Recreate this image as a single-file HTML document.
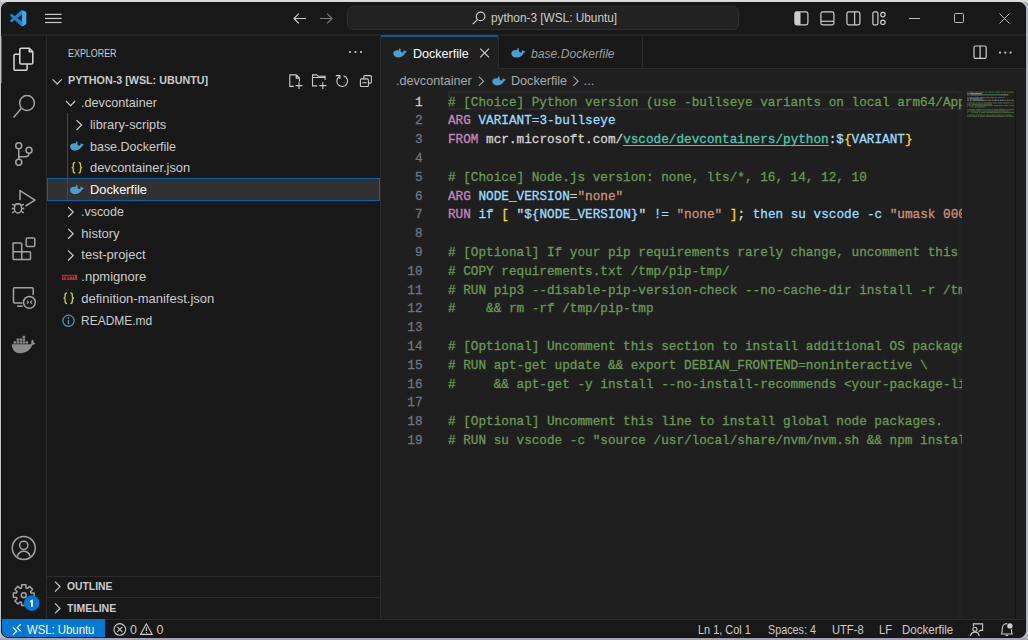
<!DOCTYPE html>
<html><head><meta charset="utf-8">
<style>
*{box-sizing:border-box;margin:0;padding:0}
html,body{width:1028px;height:640px;overflow:hidden;background:#b6b6c2}
body{position:relative;font-family:"Liberation Sans",sans-serif;color:#cccccc}
.a{position:absolute;white-space:pre}
#win{position:absolute;left:1px;top:2px;width:1025px;height:636px;background:#181818;border:1px solid #141414;border-radius:7px;overflow:hidden}
.ln{position:absolute;left:0;width:100%;height:1px;background:#2b2b2b}
.vl{position:absolute;top:0;width:1px;background:#2b2b2b}
svg{position:absolute;overflow:visible}
.mono{font-family:"Liberation Mono",monospace;-webkit-text-stroke:0.3px currentColor}
</style></head><body>
<div class="a" style="left:0;top:0;width:1028px;height:2px;background:#dadada"></div>
<div class="a" style="left:0;top:0;width:1px;height:640px;background:#c4c4c8"></div>
<div class="a" style="left:0;top:638px;width:1028px;height:2px;background:#a4a4b0"></div>
<div id="win"></div>
<!-- title bar -->
<!-- logo -->
<svg style="left:9.7px;top:9.7px" width="16.2" height="16.3" viewBox="0 0 100 100" preserveAspectRatio="none"><path fill="#1c86d6" d="M96.46 10.8L75.86.87a6.23 6.23 0 0 0-7.1 1.2L29.3 38.08 12.12 25.03a4.16 4.16 0 0 0-5.32.24L1.3 30.26a4.16 4.16 0 0 0 0 6.16L16.2 50 1.3 63.58a4.160 4.16 0 0 0 0 6.16l5.5 4.99a4.16 4.16 0 0 0 5.32.24L29.3 61.92l39.460 36.01a6.23 6.23 0 0 0 7.1 1.2l20.6-9.92A6.24 6.24 0 0 0 100 83.6V16.4a6.24 6.24 0 0 0-3.54-5.6zM75.02 72.7L45.1 50l29.92-22.7v45.4z"/><path fill="#3fabf5" d="M75.86.87L96.46 10.8A6.24 6.24 0 0 1 100 16.4V83.6a6.24 6.24 0 0 1-3.54 5.6l-20.6 9.92z"/></svg>
<!-- hamburger -->
<svg style="left:45px;top:13px" width="17" height="11" viewBox="0 0 17 11"><g stroke="#cccccc" stroke-width="1.2"><line x1="0" y1="1.4" x2="16.6" y2="1.4"/><line x1="0" y1="5.45" x2="16.6" y2="5.45"/><line x1="0" y1="9.5" x2="16.6" y2="9.5"/></g></svg>
<!-- back/forward -->
<svg style="left:293px;top:13px" width="14" height="11" viewBox="0 0 14 11"><g fill="none" stroke="#cccccc" stroke-width="1.2"><path d="M13 5.5H1M5.8 0.6L1 5.5l4.8 4.9"/></g></svg>
<svg style="left:319px;top:13px" width="14" height="11" viewBox="0 0 14 11"><g fill="none" stroke="#7a7a7a" stroke-width="1.2"><path d="M1 5.5H13M8.2 0.6L13 5.5l-4.8 4.9"/></g></svg>
<!-- command center -->
<div class="a" style="left:347px;top:6px;width:392px;height:24px;background:#222222;border:1px solid #2e2e2e;border-radius:6px"></div>
<svg style="left:471.5px;top:10.5px" width="14" height="14" viewBox="0 0 14 14"><g fill="none" stroke="#cccccc" stroke-width="1.2"><circle cx="8.6" cy="5.4" r="4.3"/><path d="M5.6 8.4L0.8 13.2"/></g></svg>
<span class="a" id="cc" style="left:490.5px;top:10.5px;font-size:12px;line-height:15px;color:#cccccc;transform-origin:0 0;transform:scaleX(0.985)">python-3 [WSL: Ubuntu]</span>
<!-- layout icons -->
<svg style="left:794px;top:10.5px" width="15" height="15" viewBox="0 0 15 15"><rect x="0.9" y="0.9" width="13" height="13" rx="1.8" fill="none" stroke="#cccccc" stroke-width="1.2"/><rect x="0.9" y="0.9" width="5.6" height="13" rx="1.2" fill="#cccccc"/></svg>
<svg style="left:820px;top:10.5px" width="15" height="15" viewBox="0 0 15 15"><rect x="0.9" y="0.9" width="13" height="13" rx="1.8" fill="none" stroke="#cccccc" stroke-width="1.2"/><path d="M0.9 10.3H13.9" stroke="#cccccc" stroke-width="1.2"/></svg>
<svg style="left:846px;top:10.5px" width="15" height="15" viewBox="0 0 15 15"><rect x="0.9" y="0.9" width="13" height="13" rx="1.8" fill="none" stroke="#cccccc" stroke-width="1.2"/><path d="M8.6 0.9V13.9" stroke="#cccccc" stroke-width="1.2"/></svg>
<svg style="left:872px;top:10.5px" width="15" height="15" viewBox="0 0 15 15"><g fill="none" stroke="#cccccc" stroke-width="1.2"><rect x="0.9" y="0.9" width="5" height="13" rx="1.5"/><circle cx="10.9" cy="3.6" r="2.2"/><circle cx="10.9" cy="11.3" r="2.2"/></g></svg>
<!-- window controls -->
<div class="a" style="left:909px;top:17.5px;width:10.5px;height:1.3px;background:#bdbdbd"></div>
<div class="a" style="left:954px;top:13px;width:10.2px;height:10.2px;border:1.1px solid #bdbdbd;border-radius:1.5px"></div>
<svg style="left:999px;top:13px" width="11" height="11" viewBox="0 0 11 11"><path d="M0.5 0.5L10.5 10.5M10.5 0.5L0.5 10.5" stroke="#bdbdbd" stroke-width="1"/></svg>

<div class="a" style="left:2px;top:34px;width:1024px;height:2px;background:#232323"></div>


<svg style="left:0;top:0" width="1028" height="640" viewBox="0 0 1028 640">
 <!-- explorer (active) -->
 <g fill="none" stroke="#d8d8d8" stroke-width="1.5" stroke-linejoin="round">
  <path d="M19.8 53.8V49.5a1.3 1.3 0 0 1 1.3-1.3H29.3L32.8 51.7V62.7a1.3 1.3 0 0 1-1.3 1.3H21.1a1.3 1.3 0 0 1-1.3-1.3z"/>
  <path d="M29.3 48.5V51.8H32.6"/>
  <path d="M19.8 54.3H15.3a1.3 1.3 0 0 0-1.3 1.3V69a1.3 1.3 0 0 0 1.3 1.3H25.8a1.3 1.3 0 0 0 1.3-1.3V64.2"/>
 </g>
 <g fill="none" stroke="#a3a3a3" stroke-width="1.5" stroke-linejoin="round">
  <!-- search -->
  <circle cx="27" cy="103" r="7.4"/>
  <path d="M21.2 108.6L13.6 117.6"/>
  <!-- source control -->
  <circle cx="18.75" cy="145.75" r="3"/>
  <circle cx="29" cy="150.3" r="3"/>
  <circle cx="18.75" cy="162.3" r="3"/>
  <path d="M18.75 148.75V159.3"/>
  <path d="M29 153.3C29 155.6 27.6 156.8 25.3 156.8H18.75"/>
  <!-- run debug -->
  <path d="M20 200V190.6L35 200.1L25.6 206"/>
  <ellipse cx="18" cy="208.4" rx="3.6" ry="4.6"/>
  <path d="M14.6 204.8Q18 202.5 21.4 204.8"/>
  <path d="M12.2 204.2L14.6 205.6M23.8 204.2L21.4 205.6M11.8 208.4H14.4M21.6 208.4H24.2M12.2 212.8L14.7 211.4M23.8 212.8L21.3 211.4"/>
  <!-- extensions -->
  <path d="M13.2 243H20.8A.8 .8 0 0 1 21.7 243.8V251.8H29.7A.8 .8 0 0 1 30.5 252.6V258.8A.8 .8 0 0 1 29.7 259.6H13.9A.8 .8 0 0 1 13.1 258.8V243.8A.8 .8 0 0 1 13.2 243Z"/>
  <path d="M13.1 251.8H21.7V259.6"/>
  <rect x="26.2" y="238" width="8.6" height="8.6" rx="1.3"/>
  <!-- remote explorer -->
  <path d="M22.5 303H14.5A1 1 0 0 1 13.5 302V288.8A1 1 0 0 1 14.5 287.8H32.2A1 1 0 0 1 33.2 288.8V295"/>
  <path d="M17 306.2H22.8"/>
  <circle cx="29.4" cy="302.3" r="5.9"/>
  <path d="M26.8 300.6L28.5 302.2L26.8 303.8M32.1 300.6L30.4 302.2L32.1 303.8" stroke-width="1.1"/>
  <!-- account -->
  <circle cx="23.75" cy="548" r="11.5"/>
  <circle cx="23.75" cy="545.3" r="4.1"/>
  <path d="M17.2 556.6C18.2 553.2 20.8 551.2 23.75 551.2S29.3 553.2 30.3 556.6"/>
  <!-- gear -->
  <path d="M21.50 587.94 L21.64 584.81 L25.86 584.81 L26.00 587.94 L27.30 588.48 L29.61 586.36 L32.59 589.34 L30.47 591.65 L31.01 592.95 L34.14 593.09 L34.14 597.31 L31.01 597.45 L30.47 598.75 L32.59 601.06 L29.61 604.04 L27.30 601.92 L26.00 602.46 L25.86 605.59 L21.64 605.59 L21.50 602.46 L20.20 601.92 L17.89 604.04 L14.91 601.06 L17.03 598.75 L16.49 597.45 L13.36 597.31 L13.36 593.09 L16.49 592.95 L17.03 591.65 L14.91 589.34 L17.89 586.36 L20.20 588.48Z" stroke-linejoin="round"/>
  <circle cx="23.75" cy="595.2" r="2.4"/>
 </g>
 <!-- docker -->
 <g fill="#8c8c8c">
  <path d="M11.8 344.3H31.3C31 342.6 31.3 340.9 32.2 339.6C33.4 340.5 34 341.6 34 343C35 342.8 35.5 343.2 35.3 343.6C34.6 344.6 33.4 345 32.3 345C30.5 349.8 26.2 353.2 19.8 353.2C14.6 353.2 12 349.6 11.8 344.3Z"/>
  <rect x="13.6" y="341.3" width="2.5" height="2.3"/><rect x="16.6" y="341.3" width="2.5" height="2.3"/><rect x="19.6" y="341.3" width="2.5" height="2.3"/><rect x="22.6" y="341.3" width="2.5" height="2.3"/><rect x="25.6" y="341.3" width="2.5" height="2.3"/>
  <rect x="16.6" y="338.5" width="2.5" height="2.3"/><rect x="19.6" y="338.5" width="2.5" height="2.3"/><rect x="22.6" y="338.5" width="2.5" height="2.3"/>
  <rect x="22.6" y="335.8" width="2.5" height="2.3"/>
 </g>
 <!-- badge -->
 <circle cx="31.7" cy="603.1" r="7.8" fill="#0078d4"/>
 <path d="M30.1 601.9L31.9 600.9V606.8" fill="none" stroke="#ffffff" stroke-width="1.8"/>
</svg>
<!-- activity bar border -->
<div class="a" style="left:46px;top:35px;width:1px;height:585px;background:#2b2b2b"></div>
<div class="a" style="left:1px;top:35.5px;width:1.4px;height:47.5px;background:#0078d4"></div>


<span class="a" id="explorer" style="left:67.8px;top:44px;font-size:11.5px;line-height:18px;color:#cccccc;transform-origin:0 0;transform:scaleX(0.775)">EXPLORER</span>
<svg style="left:348px;top:50px" width="16" height="4" viewBox="0 0 16 4"><g fill="#cccccc"><circle cx="2" cy="2" r="1.1"/><circle cx="7.5" cy="2" r="1.1"/><circle cx="13" cy="2" r="1.1"/></g></svg>
<svg style="left:0;top:0" width="1028" height="640" viewBox="0 0 1028 640">
 <path d="M52.6 79.4L57.2 84L61.8 79.4" fill="none" stroke="#cccccc" stroke-width="1.2"/>
 <g fill="none" stroke="#cccccc" stroke-width="1.1">
  <path d="M293.8 86.4H289.8V74.9H296.2L299.4 78.1V81.5M296.2 74.9V78.1H299.4"/>
  <path d="M299 82.2V89.1M295.5 85.65H302.5"/>
  <path d="M317.2 85.9H312.5V74.9H316.7L318.1 76.3H325.1V80M312.5 77.5H325.1"/>
  <path d="M322.8 82.2V89.1M319.3 85.65H326.3"/>
  <path d="M343.6 75.9A5.4 5.4 0 1 1 339.6 76.4"/>
  <path d="M335.8 75.6H339.9V79.1"/>
  <rect x="360.4" y="78.9" width="8" height="7.6" rx="1"/>
  <path d="M363.8 78.9V76.6A1 1 0 0 1 364.8 75.6H370.4A1 1 0 0 1 371.4 76.6V82.1A1 1 0 0 1 370.4 83.1H368.4"/>
  <path d="M362.3 82.7H366.5"/>
 </g>
</svg>
<span class="a" id="proj" style="left:67.5px;top:71px;font-size:11px;line-height:18px;font-weight:bold;color:#cccccc;transform-origin:0 0;transform:scaleX(0.975)">PYTHON-3 [WSL: UBUNTU]</span>
<!-- outline / timeline -->
<div class="a" style="left:47px;top:575.5px;width:333px;height:1px;background:#2b2b2b"></div>
<div class="a" style="left:47px;top:597.3px;width:333px;height:1px;background:#2b2b2b"></div>
<svg style="left:0;top:0" width="1028" height="640" viewBox="0 0 1028 640"><g fill="none" stroke="#cccccc" stroke-width="1.2"><path d="M55 581.6L60 586.6L55 591.6M55 603.4L60 608.4L55 613.4"/></g></svg>
<span class="a" style="left:67.2px;top:577px;font-size:11px;line-height:18px;font-weight:bold;color:#cccccc;transform-origin:0 0;transform:scaleX(0.94)">OUTLINE</span>
<span class="a" style="left:67.2px;top:599px;font-size:11px;line-height:18px;font-weight:bold;color:#cccccc;transform-origin:0 0;transform:scaleX(0.96)">TIMELINE</span>
<div class="a" style="left:47px;top:178px;width:333px;height:22.5px;background:#313131;border:1.2px solid #0a62ad"></div>
<div class="a" style="left:67px;top:113px;width:1px;height:87px;background:#464646"></div>
<span class="a" style="left:81.3px;top:92.20px;font-size:13px;line-height:22px;color:#cccccc;transform-origin:0 0;transform:scaleX(0.973)">.devcontainer</span>
<span class="a" style="left:89.5px;top:113.95px;font-size:13px;line-height:22px;color:#cccccc;transform-origin:0 0;transform:scaleX(0.985)">library-scripts</span>
<span class="a" style="left:89.5px;top:135.70px;font-size:13px;line-height:22px;color:#cccccc;transform-origin:0 0;transform:scaleX(0.96)">base.Dockerfile</span>
<span class="a" style="left:89.5px;top:157.45px;font-size:13px;line-height:22px;color:#cccccc;transform-origin:0 0;transform:scaleX(0.99)">devcontainer.json</span>
<span class="a" style="left:89.5px;top:179.20px;font-size:13px;line-height:22px;color:#ffffff;transform-origin:0 0;transform:scaleX(0.986)">Dockerfile</span>
<span class="a" style="left:81.3px;top:200.95px;font-size:13px;line-height:22px;color:#cccccc;transform-origin:0 0;transform:scaleX(0.957)">.vscode</span>
<span class="a" style="left:81.3px;top:222.70px;font-size:13px;line-height:22px;color:#cccccc">history</span>
<span class="a" style="left:81.3px;top:244.45px;font-size:13px;line-height:22px;color:#cccccc">test-project</span>
<span class="a" style="left:81.3px;top:266.20px;font-size:13px;line-height:22px;color:#cccccc">.npmignore</span>
<span class="a" style="left:81.3px;top:287.95px;font-size:13px;line-height:22px;color:#cccccc">definition-manifest.json</span>
<span class="a" style="left:81.3px;top:309.70px;font-size:13px;line-height:22px;color:#cccccc;transform-origin:0 0;transform:scaleX(0.922)">README.md</span>
<svg style="left:0;top:0" width="1028" height="640" viewBox="0 0 1028 640">
<path d="M66.00 101.00L70.60 105.60L75.20 101.00" fill="none" stroke="#cccccc" stroke-width="1.2"/>
<path d="M76.50 120.15L81.60 125.05L76.50 129.95" fill="none" stroke="#cccccc" stroke-width="1.2"/>
<svg x="69.8" y="141.20" width="14.2" height="9.5" fill="#4d9ed0"><use href="#whale"/></svg>
<g transform="translate(0,0)" fill="none" stroke="#cbcb41" stroke-width="1.3"><path d="M75.2 162.3C73.7 162.3 73.3 163 73.3 164.5V166.2C73.3 167.2 72.8 167.6 71.7 167.6C72.8 167.6 73.3 168 73.3 169V170.8C73.3 172.3 73.7 173 75.2 173"/><path d="M78.6 162.3C80.1 162.3 80.5 163 80.5 164.5V166.2C80.5 167.2 81 167.6 82.1 167.6C81 167.6 80.5 168 80.5 169V170.8C80.5 172.3 80.1 173 78.6 173"/></g>
<svg x="69.8" y="184.70" width="14.2" height="9.5" fill="#4d9ed0"><use href="#whale"/></svg>
<path d="M68.10 207.15L73.20 212.05L68.10 216.95" fill="none" stroke="#cccccc" stroke-width="1.2"/>
<path d="M68.10 228.90L73.20 233.80L68.10 238.70" fill="none" stroke="#cccccc" stroke-width="1.2"/>
<path d="M68.10 250.65L73.20 255.55L68.10 260.45" fill="none" stroke="#cccccc" stroke-width="1.2"/>
<g transform="translate(62.0,274.8)"><rect width="15" height="5" fill="#cb3837"/><path d="M1.2 1.2V4M1.2 1.2H3.3V4M4.5 1.2V5M4.5 1.2H6.6V3H4.5M7.8 4V1.2H12.6V4M10.2 1.2V4" fill="none" stroke="#181818" stroke-width="0.8"/></g>
<g transform="translate(-8.2,130.5)" fill="none" stroke="#cbcb41" stroke-width="1.3"><path d="M75.2 162.3C73.7 162.3 73.3 163 73.3 164.5V166.2C73.3 167.2 72.8 167.6 71.7 167.6C72.8 167.6 73.3 168 73.3 169V170.8C73.3 172.3 73.7 173 75.2 173"/><path d="M78.6 162.3C80.1 162.3 80.5 163 80.5 164.5V166.2C80.5 167.2 81 167.6 82.1 167.6C81 167.6 80.5 168 80.5 169V170.8C80.5 172.3 80.1 173 78.6 173"/></g>
<circle cx="68.5" cy="320.8" r="5.6" fill="none" stroke="#519aba" stroke-width="1.2"/><path d="M68.5 320.0V324.1" stroke="#519aba" stroke-width="1.4"/><circle cx="68.5" cy="317.90000000000003" r="0.85" fill="#519aba"/>
</svg>
<!-- sidebar border -->
<div class="a" style="left:380px;top:35px;width:1px;height:585px;background:#2b2b2b"></div>

<!-- editor bg -->
<div class="a" style="left:381px;top:69px;width:645px;height:551px;background:#1f1f1f"></div>
<!-- tabs -->
<div class="a" style="left:381px;top:35px;width:117px;height:34px;background:#1f1f1f"></div>
<div class="a" style="left:381px;top:35px;width:117px;height:2px;background:#0d5a9a"></div>
<div class="a" style="left:498px;top:35px;width:1px;height:34px;background:#2b2b2b"></div>
<div class="a" style="left:642px;top:35px;width:1px;height:34px;background:#2b2b2b"></div>
<div class="a" style="left:499px;top:68px;width:527px;height:1px;background:#2b2b2b"></div>


<svg style="left:0;top:0" width="0" height="0"><defs><symbol id="whale" viewBox="0 0 14.25 9.5"><path d="M0.3 5C0.5 2.8 2.5 2 4.5 2H6L6.5 0.1L7.6 0.3L7.9 3.5C8.6 4.4 9.6 4.7 10.5 4.1L10.9 2L12.5 2.9L14.2 3.4L12.1 5.4C10.6 8.4 7.6 9.6 5 9.5C2 9.3 0.1 7.5 0.3 5Z"/></symbol></defs></svg>
<svg style="left:392.8px;top:47.6px" width="14" height="9.7" fill="#4d9ed0"><use href="#whale"/></svg>
<span class="a" style="left:413px;top:42.5px;font-size:13.2px;line-height:22px;color:#ffffff;transform-origin:0 0;transform:scaleX(0.95)">Dockerfile</span>
<svg style="left:0;top:0" width="1028" height="640"><path d="M480.2 48.6L489 57.4M489 48.6L480.2 57.4" stroke="#cccccc" stroke-width="1.2"/></svg>
<svg style="left:511.3px;top:47.6px" width="14.5" height="9.7" fill="#4d9ed0"><use href="#whale"/></svg>
<span class="a" style="left:531px;top:42.5px;font-size:13.2px;line-height:22px;color:#9d9d9d;font-style:italic;transform-origin:0 0;transform:scaleX(0.92)">base.Dockerfile</span>
<!-- editor actions -->
<svg style="left:0;top:0" width="1028" height="640"><g fill="none" stroke="#cccccc" stroke-width="1.2"><rect x="974" y="46" width="12.2" height="12.4" rx="1.6"/><path d="M980.1 46V58.4"/></g><g fill="#cccccc"><circle cx="1000" cy="52.6" r="1.1"/><circle cx="1005.3" cy="52.6" r="1.1"/><circle cx="1010.6" cy="52.6" r="1.1"/></g></svg>
<!-- breadcrumbs -->
<span class="a" style="left:396px;top:70.3px;font-size:13px;line-height:22px;color:#a9a9a9;transform-origin:0 0;transform:scaleX(0.97)">.devcontainer</span>
<svg style="left:0;top:0" width="1028" height="640"><path d="M478.8 76.6L483.6 81.2L478.8 85.8M573.3 76.6L578.1 81.2L573.3 85.8" fill="none" stroke="#a9a9a9" stroke-width="1.1"/></svg>
<svg style="left:491.6px;top:76px" width="14" height="9.7" fill="#4d9ed0"><use href="#whale"/></svg>
<span class="a" style="left:510.5px;top:70.3px;font-size:13px;line-height:22px;color:#a9a9a9;transform-origin:0 0;transform:scaleX(0.97)">Dockerfile</span>
<span class="a" style="left:583.6px;top:70.3px;font-size:13px;line-height:22px;color:#a9a9a9">...</span>

<div class="a" style="left:958px;top:91px;width:4px;height:528px;background:#212221"></div>
<!--EDITOR-->
<div class="a" style="left:381px;top:91.4px;width:581px;height:19px;"></div>
<div class="a" style="left:447.7px;top:91.4px;width:514.3px;height:19px;border:2px solid #282828;border-right:none"></div>
<div class="a mono" style="left:381px;width:41.5px;text-align:right;top:93.62px;font-size:12.69px;line-height:18.8px;color:#cccccc">1</div>
<div class="a mono" style="left:381px;width:41.5px;text-align:right;top:112.42px;font-size:12.69px;line-height:18.8px;color:#6e7681">2</div>
<div class="a mono" style="left:381px;width:41.5px;text-align:right;top:131.22px;font-size:12.69px;line-height:18.8px;color:#6e7681">3</div>
<div class="a mono" style="left:381px;width:41.5px;text-align:right;top:150.02px;font-size:12.69px;line-height:18.8px;color:#6e7681">4</div>
<div class="a mono" style="left:381px;width:41.5px;text-align:right;top:168.82px;font-size:12.69px;line-height:18.8px;color:#6e7681">5</div>
<div class="a mono" style="left:381px;width:41.5px;text-align:right;top:187.62px;font-size:12.69px;line-height:18.8px;color:#6e7681">6</div>
<div class="a mono" style="left:381px;width:41.5px;text-align:right;top:206.42px;font-size:12.69px;line-height:18.8px;color:#6e7681">7</div>
<div class="a mono" style="left:381px;width:41.5px;text-align:right;top:225.22px;font-size:12.69px;line-height:18.8px;color:#6e7681">8</div>
<div class="a mono" style="left:381px;width:41.5px;text-align:right;top:244.02px;font-size:12.69px;line-height:18.8px;color:#6e7681">9</div>
<div class="a mono" style="left:381px;width:41.5px;text-align:right;top:262.82px;font-size:12.69px;line-height:18.8px;color:#6e7681">10</div>
<div class="a mono" style="left:381px;width:41.5px;text-align:right;top:281.62px;font-size:12.69px;line-height:18.8px;color:#6e7681">11</div>
<div class="a mono" style="left:381px;width:41.5px;text-align:right;top:300.42px;font-size:12.69px;line-height:18.8px;color:#6e7681">12</div>
<div class="a mono" style="left:381px;width:41.5px;text-align:right;top:319.22px;font-size:12.69px;line-height:18.8px;color:#6e7681">13</div>
<div class="a mono" style="left:381px;width:41.5px;text-align:right;top:338.02px;font-size:12.69px;line-height:18.8px;color:#6e7681">14</div>
<div class="a mono" style="left:381px;width:41.5px;text-align:right;top:356.82px;font-size:12.69px;line-height:18.8px;color:#6e7681">15</div>
<div class="a mono" style="left:381px;width:41.5px;text-align:right;top:375.62px;font-size:12.69px;line-height:18.8px;color:#6e7681">16</div>
<div class="a mono" style="left:381px;width:41.5px;text-align:right;top:394.42px;font-size:12.69px;line-height:18.8px;color:#6e7681">17</div>
<div class="a mono" style="left:381px;width:41.5px;text-align:right;top:413.22px;font-size:12.69px;line-height:18.8px;color:#6e7681">18</div>
<div class="a mono" style="left:381px;width:41.5px;text-align:right;top:432.02px;font-size:12.69px;line-height:18.8px;color:#6e7681">19</div>
<div class="a" style="left:448px;top:90px;width:514px;height:360px;overflow:hidden">
<div class="a mono" style="left:0;top:3.62px;font-size:12.69px;line-height:18.8px"><span style="color:#6a9955"># [Choice] Python version (use -bullseye variants on local arm64/Apple Silicon): 3, 3.10, 3.9, 3.8, 3.7, 3.6, 3-bullseye, 3.10-bullseye</span></div>
<div class="a mono" style="left:0;top:22.42px;font-size:12.69px;line-height:18.8px"><span style="color:#c586c0">ARG</span><span style="color:#d4d4d4"> </span><span style="color:#9cdcfe">VARIANT=3-bullseye</span></div>
<div class="a mono" style="left:0;top:41.22px;font-size:12.69px;line-height:18.8px"><span style="color:#c586c0">FROM</span><span style="color:#d4d4d4"> mcr.microsoft.com/</span><span style="color:#4ec9b0;text-decoration:underline;text-underline-offset:2px">vscode/devcontainers/python</span><span style="color:#d4d4d4">:</span><span style="color:#9cdcfe">$</span><span style="color:#ffd700">{</span><span style="color:#9cdcfe">VARIANT</span><span style="color:#ffd700">}</span></div>
<div class="a mono" style="left:0;top:60.02px;font-size:12.69px;line-height:18.8px"></div>
<div class="a mono" style="left:0;top:78.82px;font-size:12.69px;line-height:18.8px"><span style="color:#6a9955"># [Choice] Node.js version: none, lts/*, 16, 14, 12, 10</span></div>
<div class="a mono" style="left:0;top:97.62px;font-size:12.69px;line-height:18.8px"><span style="color:#c586c0">ARG</span><span style="color:#d4d4d4"> </span><span style="color:#9cdcfe">NODE_VERSION</span><span style="color:#d4d4d4">=</span><span style="color:#ce9178">&quot;none&quot;</span></div>
<div class="a mono" style="left:0;top:116.42px;font-size:12.69px;line-height:18.8px"><span style="color:#c586c0">RUN</span><span style="color:#d4d4d4"> </span><span style="color:#9cdcfe">if</span><span style="color:#d4d4d4"> </span><span style="color:#ffd700">[</span><span style="color:#d4d4d4"> &quot;</span><span style="color:#9cdcfe">${NODE_VERSION}</span><span style="color:#d4d4d4">&quot;</span><span style="color:#9cdcfe"> != </span><span style="color:#ce9178">&quot;none&quot;</span><span style="color:#d4d4d4"> </span><span style="color:#ffd700">]</span><span style="color:#d4d4d4">; </span><span style="color:#9cdcfe">then su vscode -c </span><span style="color:#ce9178">&quot;umask 0002 &amp;&amp; . /usr/local/share/nvm/nvm.sh &amp;&amp; nvm install ${NODE_VERSION} 2&gt;&amp;1&quot;</span><span style="color:#d4d4d4">; </span><span style="color:#9cdcfe">fi</span></div>
<div class="a mono" style="left:0;top:135.22px;font-size:12.69px;line-height:18.8px"></div>
<div class="a mono" style="left:0;top:154.02px;font-size:12.69px;line-height:18.8px"><span style="color:#6a9955"># [Optional] If your pip requirements rarely change, uncomment this section to add them to the image.</span></div>
<div class="a mono" style="left:0;top:172.82px;font-size:12.69px;line-height:18.8px"><span style="color:#6a9955"># COPY requirements.txt /tmp/pip-tmp/</span></div>
<div class="a mono" style="left:0;top:191.62px;font-size:12.69px;line-height:18.8px"><span style="color:#6a9955"># RUN pip3 --disable-pip-version-check --no-cache-dir install -r /tmp/pip-tmp/requirements.txt \</span></div>
<div class="a mono" style="left:0;top:210.42px;font-size:12.69px;line-height:18.8px"><span style="color:#6a9955">#    &amp;&amp; rm -rf /tmp/pip-tmp</span></div>
<div class="a mono" style="left:0;top:229.22px;font-size:12.69px;line-height:18.8px"></div>
<div class="a mono" style="left:0;top:248.02px;font-size:12.69px;line-height:18.8px"><span style="color:#6a9955"># [Optional] Uncomment this section to install additional OS packages.</span></div>
<div class="a mono" style="left:0;top:266.82px;font-size:12.69px;line-height:18.8px"><span style="color:#6a9955"># RUN apt-get update &amp;&amp; export DEBIAN_FRONTEND=noninteractive \</span></div>
<div class="a mono" style="left:0;top:285.62px;font-size:12.69px;line-height:18.8px"><span style="color:#6a9955">#     &amp;&amp; apt-get -y install --no-install-recommends &lt;your-package-list-here&gt;</span></div>
<div class="a mono" style="left:0;top:304.42px;font-size:12.69px;line-height:18.8px"></div>
<div class="a mono" style="left:0;top:323.22px;font-size:12.69px;line-height:18.8px"><span style="color:#6a9955"># [Optional] Uncomment this line to install global node packages.</span></div>
<div class="a mono" style="left:0;top:342.02px;font-size:12.69px;line-height:18.8px"><span style="color:#6a9955"># RUN su vscode -c &quot;source /usr/local/share/nvm/nvm.sh &amp;&amp; npm install -g &lt;your-package-here&gt;&quot; 2&gt;&amp;1</span></div>
</div>
<svg style="left:967px;top:91px;overflow:hidden" width="47" height="28" viewBox="0 0 47 28">
<rect x="0.00" y="0.60" width="0.68" height="1.05" fill="#6a9955" opacity="0.55"/>
<rect x="1.36" y="0.60" width="5.44" height="1.05" fill="#6a9955" opacity="0.55"/>
<rect x="7.48" y="0.60" width="4.08" height="1.05" fill="#6a9955" opacity="0.55"/>
<rect x="12.24" y="0.60" width="4.76" height="1.05" fill="#6a9955" opacity="0.55"/>
<rect x="17.68" y="0.60" width="2.72" height="1.05" fill="#6a9955" opacity="0.55"/>
<rect x="21.08" y="0.60" width="6.12" height="1.05" fill="#6a9955" opacity="0.55"/>
<rect x="27.88" y="0.60" width="5.44" height="1.05" fill="#6a9955" opacity="0.55"/>
<rect x="34.00" y="0.60" width="1.36" height="1.05" fill="#6a9955" opacity="0.55"/>
<rect x="36.04" y="0.60" width="3.40" height="1.05" fill="#6a9955" opacity="0.55"/>
<rect x="40.12" y="0.60" width="7.48" height="1.05" fill="#6a9955" opacity="0.55"/>
<rect x="48.28" y="0.60" width="6.12" height="1.05" fill="#6a9955" opacity="0.55"/>
<rect x="55.08" y="0.60" width="1.36" height="1.05" fill="#6a9955" opacity="0.55"/>
<rect x="57.12" y="0.60" width="3.40" height="1.05" fill="#6a9955" opacity="0.55"/>
<rect x="61.20" y="0.60" width="2.72" height="1.05" fill="#6a9955" opacity="0.55"/>
<rect x="64.60" y="0.60" width="2.72" height="1.05" fill="#6a9955" opacity="0.55"/>
<rect x="68.00" y="0.60" width="2.72" height="1.05" fill="#6a9955" opacity="0.55"/>
<rect x="71.40" y="0.60" width="2.72" height="1.05" fill="#6a9955" opacity="0.55"/>
<rect x="74.80" y="0.60" width="7.48" height="1.05" fill="#6a9955" opacity="0.55"/>
<rect x="82.96" y="0.60" width="8.84" height="1.05" fill="#6a9955" opacity="0.55"/>
<rect x="0.00" y="1.95" width="2.04" height="1.05" fill="#c586c0" opacity="0.55"/>
<rect x="2.72" y="1.95" width="12.24" height="1.05" fill="#9cdcfe" opacity="0.55"/>
<rect x="0.00" y="3.30" width="2.72" height="1.05" fill="#c586c0" opacity="0.55"/>
<rect x="3.40" y="3.30" width="12.24" height="1.05" fill="#d4d4d4" opacity="0.55"/>
<rect x="15.64" y="3.30" width="18.36" height="1.05" fill="#4ec9b0" opacity="0.55"/>
<rect x="34.00" y="3.30" width="0.68" height="1.05" fill="#d4d4d4" opacity="0.55"/>
<rect x="34.68" y="3.30" width="0.68" height="1.05" fill="#9cdcfe" opacity="0.55"/>
<rect x="35.36" y="3.30" width="0.68" height="1.05" fill="#ffd700" opacity="0.55"/>
<rect x="36.04" y="3.30" width="4.76" height="1.05" fill="#9cdcfe" opacity="0.55"/>
<rect x="40.80" y="3.30" width="0.68" height="1.05" fill="#ffd700" opacity="0.55"/>
<rect x="0.00" y="6.00" width="0.68" height="1.05" fill="#6a9955" opacity="0.55"/>
<rect x="1.36" y="6.00" width="5.44" height="1.05" fill="#6a9955" opacity="0.55"/>
<rect x="7.48" y="6.00" width="4.76" height="1.05" fill="#6a9955" opacity="0.55"/>
<rect x="12.92" y="6.00" width="5.44" height="1.05" fill="#6a9955" opacity="0.55"/>
<rect x="19.04" y="6.00" width="3.40" height="1.05" fill="#6a9955" opacity="0.55"/>
<rect x="23.12" y="6.00" width="4.08" height="1.05" fill="#6a9955" opacity="0.55"/>
<rect x="27.88" y="6.00" width="2.04" height="1.05" fill="#6a9955" opacity="0.55"/>
<rect x="30.60" y="6.00" width="2.04" height="1.05" fill="#6a9955" opacity="0.55"/>
<rect x="33.32" y="6.00" width="2.04" height="1.05" fill="#6a9955" opacity="0.55"/>
<rect x="36.04" y="6.00" width="1.36" height="1.05" fill="#6a9955" opacity="0.55"/>
<rect x="0.00" y="7.35" width="2.04" height="1.05" fill="#c586c0" opacity="0.55"/>
<rect x="2.72" y="7.35" width="8.16" height="1.05" fill="#9cdcfe" opacity="0.55"/>
<rect x="10.88" y="7.35" width="0.68" height="1.05" fill="#d4d4d4" opacity="0.55"/>
<rect x="11.56" y="7.35" width="4.08" height="1.05" fill="#ce9178" opacity="0.55"/>
<rect x="0.00" y="8.70" width="2.04" height="1.05" fill="#c586c0" opacity="0.55"/>
<rect x="2.72" y="8.70" width="1.36" height="1.05" fill="#9cdcfe" opacity="0.55"/>
<rect x="4.76" y="8.70" width="0.68" height="1.05" fill="#ffd700" opacity="0.55"/>
<rect x="6.12" y="8.70" width="0.68" height="1.05" fill="#d4d4d4" opacity="0.55"/>
<rect x="6.80" y="8.70" width="10.20" height="1.05" fill="#9cdcfe" opacity="0.55"/>
<rect x="17.00" y="8.70" width="0.68" height="1.05" fill="#d4d4d4" opacity="0.55"/>
<rect x="18.36" y="8.70" width="1.36" height="1.05" fill="#9cdcfe" opacity="0.55"/>
<rect x="20.40" y="8.70" width="4.08" height="1.05" fill="#ce9178" opacity="0.55"/>
<rect x="25.16" y="8.70" width="0.68" height="1.05" fill="#ffd700" opacity="0.55"/>
<rect x="25.84" y="8.70" width="0.68" height="1.05" fill="#d4d4d4" opacity="0.55"/>
<rect x="27.20" y="8.70" width="2.72" height="1.05" fill="#9cdcfe" opacity="0.55"/>
<rect x="30.60" y="8.70" width="1.36" height="1.05" fill="#9cdcfe" opacity="0.55"/>
<rect x="32.64" y="8.70" width="4.08" height="1.05" fill="#9cdcfe" opacity="0.55"/>
<rect x="37.40" y="8.70" width="1.36" height="1.05" fill="#9cdcfe" opacity="0.55"/>
<rect x="39.44" y="8.70" width="4.08" height="1.05" fill="#ce9178" opacity="0.55"/>
<rect x="44.20" y="8.70" width="2.72" height="1.05" fill="#ce9178" opacity="0.55"/>
<rect x="47.60" y="8.70" width="1.36" height="1.05" fill="#ce9178" opacity="0.55"/>
<rect x="49.64" y="8.70" width="0.68" height="1.05" fill="#ce9178" opacity="0.55"/>
<rect x="51.00" y="8.70" width="18.36" height="1.05" fill="#ce9178" opacity="0.55"/>
<rect x="70.04" y="8.70" width="1.36" height="1.05" fill="#ce9178" opacity="0.55"/>
<rect x="72.08" y="8.70" width="2.04" height="1.05" fill="#ce9178" opacity="0.55"/>
<rect x="74.80" y="8.70" width="4.76" height="1.05" fill="#ce9178" opacity="0.55"/>
<rect x="80.24" y="8.70" width="10.20" height="1.05" fill="#ce9178" opacity="0.55"/>
<rect x="91.12" y="8.70" width="3.40" height="1.05" fill="#ce9178" opacity="0.55"/>
<rect x="94.52" y="8.70" width="0.68" height="1.05" fill="#d4d4d4" opacity="0.55"/>
<rect x="95.88" y="8.70" width="1.36" height="1.05" fill="#9cdcfe" opacity="0.55"/>
<rect x="0.00" y="11.40" width="0.68" height="1.05" fill="#6a9955" opacity="0.55"/>
<rect x="1.36" y="11.40" width="6.80" height="1.05" fill="#6a9955" opacity="0.55"/>
<rect x="8.84" y="11.40" width="1.36" height="1.05" fill="#6a9955" opacity="0.55"/>
<rect x="10.88" y="11.40" width="2.72" height="1.05" fill="#6a9955" opacity="0.55"/>
<rect x="14.28" y="11.40" width="2.04" height="1.05" fill="#6a9955" opacity="0.55"/>
<rect x="17.00" y="11.40" width="8.16" height="1.05" fill="#6a9955" opacity="0.55"/>
<rect x="25.84" y="11.40" width="4.08" height="1.05" fill="#6a9955" opacity="0.55"/>
<rect x="30.60" y="11.40" width="4.76" height="1.05" fill="#6a9955" opacity="0.55"/>
<rect x="36.04" y="11.40" width="6.12" height="1.05" fill="#6a9955" opacity="0.55"/>
<rect x="42.84" y="11.40" width="2.72" height="1.05" fill="#6a9955" opacity="0.55"/>
<rect x="46.24" y="11.40" width="4.76" height="1.05" fill="#6a9955" opacity="0.55"/>
<rect x="51.68" y="11.40" width="1.36" height="1.05" fill="#6a9955" opacity="0.55"/>
<rect x="53.72" y="11.40" width="2.04" height="1.05" fill="#6a9955" opacity="0.55"/>
<rect x="56.44" y="11.40" width="2.72" height="1.05" fill="#6a9955" opacity="0.55"/>
<rect x="59.84" y="11.40" width="1.36" height="1.05" fill="#6a9955" opacity="0.55"/>
<rect x="61.88" y="11.40" width="2.04" height="1.05" fill="#6a9955" opacity="0.55"/>
<rect x="64.60" y="11.40" width="4.08" height="1.05" fill="#6a9955" opacity="0.55"/>
<rect x="0.00" y="12.75" width="0.68" height="1.05" fill="#6a9955" opacity="0.55"/>
<rect x="1.36" y="12.75" width="2.72" height="1.05" fill="#6a9955" opacity="0.55"/>
<rect x="4.76" y="12.75" width="10.88" height="1.05" fill="#6a9955" opacity="0.55"/>
<rect x="16.32" y="12.75" width="8.84" height="1.05" fill="#6a9955" opacity="0.55"/>
<rect x="0.00" y="14.10" width="0.68" height="1.05" fill="#6a9955" opacity="0.55"/>
<rect x="1.36" y="14.10" width="2.04" height="1.05" fill="#6a9955" opacity="0.55"/>
<rect x="4.08" y="14.10" width="2.72" height="1.05" fill="#6a9955" opacity="0.55"/>
<rect x="7.48" y="14.10" width="18.36" height="1.05" fill="#6a9955" opacity="0.55"/>
<rect x="26.52" y="14.10" width="9.52" height="1.05" fill="#6a9955" opacity="0.55"/>
<rect x="36.72" y="14.10" width="4.76" height="1.05" fill="#6a9955" opacity="0.55"/>
<rect x="42.16" y="14.10" width="1.36" height="1.05" fill="#6a9955" opacity="0.55"/>
<rect x="44.20" y="14.10" width="19.72" height="1.05" fill="#6a9955" opacity="0.55"/>
<rect x="64.60" y="14.10" width="0.68" height="1.05" fill="#6a9955" opacity="0.55"/>
<rect x="0.00" y="15.45" width="0.68" height="1.05" fill="#6a9955" opacity="0.55"/>
<rect x="3.40" y="15.45" width="1.36" height="1.05" fill="#6a9955" opacity="0.55"/>
<rect x="5.44" y="15.45" width="1.36" height="1.05" fill="#6a9955" opacity="0.55"/>
<rect x="7.48" y="15.45" width="2.04" height="1.05" fill="#6a9955" opacity="0.55"/>
<rect x="10.20" y="15.45" width="8.16" height="1.05" fill="#6a9955" opacity="0.55"/>
<rect x="0.00" y="18.15" width="0.68" height="1.05" fill="#6a9955" opacity="0.55"/>
<rect x="1.36" y="18.15" width="6.80" height="1.05" fill="#6a9955" opacity="0.55"/>
<rect x="8.84" y="18.15" width="6.12" height="1.05" fill="#6a9955" opacity="0.55"/>
<rect x="15.64" y="18.15" width="2.72" height="1.05" fill="#6a9955" opacity="0.55"/>
<rect x="19.04" y="18.15" width="4.76" height="1.05" fill="#6a9955" opacity="0.55"/>
<rect x="24.48" y="18.15" width="1.36" height="1.05" fill="#6a9955" opacity="0.55"/>
<rect x="26.52" y="18.15" width="4.76" height="1.05" fill="#6a9955" opacity="0.55"/>
<rect x="31.96" y="18.15" width="6.80" height="1.05" fill="#6a9955" opacity="0.55"/>
<rect x="39.44" y="18.15" width="1.36" height="1.05" fill="#6a9955" opacity="0.55"/>
<rect x="41.48" y="18.15" width="6.12" height="1.05" fill="#6a9955" opacity="0.55"/>
<rect x="0.00" y="19.50" width="0.68" height="1.05" fill="#6a9955" opacity="0.55"/>
<rect x="1.36" y="19.50" width="2.04" height="1.05" fill="#6a9955" opacity="0.55"/>
<rect x="4.08" y="19.50" width="4.76" height="1.05" fill="#6a9955" opacity="0.55"/>
<rect x="9.52" y="19.50" width="4.08" height="1.05" fill="#6a9955" opacity="0.55"/>
<rect x="14.28" y="19.50" width="1.36" height="1.05" fill="#6a9955" opacity="0.55"/>
<rect x="16.32" y="19.50" width="4.08" height="1.05" fill="#6a9955" opacity="0.55"/>
<rect x="21.08" y="19.50" width="20.40" height="1.05" fill="#6a9955" opacity="0.55"/>
<rect x="42.16" y="19.50" width="0.68" height="1.05" fill="#6a9955" opacity="0.55"/>
<rect x="0.00" y="20.85" width="0.68" height="1.05" fill="#6a9955" opacity="0.55"/>
<rect x="4.08" y="20.85" width="1.36" height="1.05" fill="#6a9955" opacity="0.55"/>
<rect x="6.12" y="20.85" width="4.76" height="1.05" fill="#6a9955" opacity="0.55"/>
<rect x="11.56" y="20.85" width="1.36" height="1.05" fill="#6a9955" opacity="0.55"/>
<rect x="13.60" y="20.85" width="4.76" height="1.05" fill="#6a9955" opacity="0.55"/>
<rect x="19.04" y="20.85" width="15.64" height="1.05" fill="#6a9955" opacity="0.55"/>
<rect x="35.36" y="20.85" width="16.32" height="1.05" fill="#6a9955" opacity="0.55"/>
<rect x="0.00" y="23.55" width="0.68" height="1.05" fill="#6a9955" opacity="0.55"/>
<rect x="1.36" y="23.55" width="6.80" height="1.05" fill="#6a9955" opacity="0.55"/>
<rect x="8.84" y="23.55" width="6.12" height="1.05" fill="#6a9955" opacity="0.55"/>
<rect x="15.64" y="23.55" width="2.72" height="1.05" fill="#6a9955" opacity="0.55"/>
<rect x="19.04" y="23.55" width="2.72" height="1.05" fill="#6a9955" opacity="0.55"/>
<rect x="22.44" y="23.55" width="1.36" height="1.05" fill="#6a9955" opacity="0.55"/>
<rect x="24.48" y="23.55" width="4.76" height="1.05" fill="#6a9955" opacity="0.55"/>
<rect x="29.92" y="23.55" width="4.08" height="1.05" fill="#6a9955" opacity="0.55"/>
<rect x="34.68" y="23.55" width="2.72" height="1.05" fill="#6a9955" opacity="0.55"/>
<rect x="38.08" y="23.55" width="6.12" height="1.05" fill="#6a9955" opacity="0.55"/>
<rect x="0.00" y="24.90" width="0.68" height="1.05" fill="#6a9955" opacity="0.55"/>
<rect x="1.36" y="24.90" width="2.04" height="1.05" fill="#6a9955" opacity="0.55"/>
<rect x="4.08" y="24.90" width="1.36" height="1.05" fill="#6a9955" opacity="0.55"/>
<rect x="6.12" y="24.90" width="4.08" height="1.05" fill="#6a9955" opacity="0.55"/>
<rect x="10.88" y="24.90" width="1.36" height="1.05" fill="#6a9955" opacity="0.55"/>
<rect x="12.92" y="24.90" width="4.76" height="1.05" fill="#6a9955" opacity="0.55"/>
<rect x="18.36" y="24.90" width="18.36" height="1.05" fill="#6a9955" opacity="0.55"/>
<rect x="37.40" y="24.90" width="1.36" height="1.05" fill="#6a9955" opacity="0.55"/>
<rect x="39.44" y="24.90" width="2.04" height="1.05" fill="#6a9955" opacity="0.55"/>
<rect x="42.16" y="24.90" width="4.76" height="1.05" fill="#6a9955" opacity="0.55"/>
<rect x="47.60" y="24.90" width="1.36" height="1.05" fill="#6a9955" opacity="0.55"/>
<rect x="49.64" y="24.90" width="13.60" height="1.05" fill="#6a9955" opacity="0.55"/>
<rect x="63.92" y="24.90" width="2.72" height="1.05" fill="#6a9955" opacity="0.55"/>
</svg>
<!--/EDITOR-->
<div class="a" style="left:1014.5px;top:91px;width:1px;height:528px;background:#141414"></div>
<!-- status bar -->
<div class="a" style="left:2px;top:619px;width:1024px;height:1px;background:#2b2b2b"></div>
<div class="a" style="left:2px;top:619px;width:103px;height:18px;background:#0078d4;border-bottom-left-radius:6px"></div>
<svg style="left:0;top:0" width="1028" height="640">
 <path d="M12.9 627.4L16.65 631.2L12.9 634.9M20.7 624.1L17.1 627.75L20.7 631.4" fill="none" stroke="#ffffff" stroke-width="1.2"/>
 <g fill="none" stroke="#cccccc" stroke-width="1.1"><circle cx="119.8" cy="629.4" r="5.8"/><path d="M117.3 626.9L122.3 631.9M122.3 626.9L117.3 631.9"/>
 <path d="M146.4 623.8L152.3 634.4H140.5Z" stroke-linejoin="round"/><path d="M146.4 627.3V631"/></g>
 <circle cx="146.4" cy="632.6" r="0.6" fill="#cccccc"/>
 <g fill="none" stroke="#cccccc" stroke-width="1.1">
  <circle cx="974.9" cy="629.2" r="2"/><path d="M970.6 636C970.9 633.4 972.6 632.1 974.9 632.1S978.9 633.4 979.2 636"/>
  <path d="M973.4 626.6V623.9H982.6V630.4H980.2L978.6 631.9"/>
  <path d="M1001.5 634H1012.2C1011.6 633 1011.5 632 1011.5 630.8V629C1011.5 626 1009.5 623.6 1006.8 623.6S1002.2 626 1002.2 629V630.8C1002.2 632 1002 633 1001.5 634Z"/><path d="M1005.4 635.4H1008.2"/>
 </g>
 <circle cx="1009.9" cy="625.9" r="3.4" fill="#181818"/><circle cx="1009.9" cy="625.9" r="2.7" fill="#cccccc"/>
</svg>
<span class="a" style="left:27px;top:621px;font-size:12.4px;line-height:18px;color:#ffffff;transform-origin:0 0;transform:scaleX(0.915)">WSL: Ubuntu</span>
<span class="a" style="left:130px;top:621px;font-size:12.4px;line-height:18px;color:#cccccc">0</span>
<span class="a" style="left:156.4px;top:621px;font-size:12.4px;line-height:18px;color:#cccccc">0</span>
<span class="a" style="left:697.6px;top:621px;font-size:12.4px;line-height:18px;color:#cccccc;transform-origin:0 0;transform:scaleX(0.88)">Ln 1, Col 1</span>
<span class="a" style="left:768px;top:621px;font-size:12.4px;line-height:18px;color:#cccccc;transform-origin:0 0;transform:scaleX(0.87)">Spaces: 4</span>
<span class="a" style="left:831.9px;top:621px;font-size:12.4px;line-height:18px;color:#cccccc;transform-origin:0 0;transform:scaleX(0.9)">UTF-8</span>
<span class="a" style="left:879.3px;top:621px;font-size:12.4px;line-height:18px;color:#cccccc;transform-origin:0 0;transform:scaleX(0.9)">LF</span>
<span class="a" style="left:901.7px;top:621px;font-size:12.4px;line-height:18px;color:#cccccc;transform-origin:0 0;transform:scaleX(0.93)">Dockerfile</span>




</body></html>
